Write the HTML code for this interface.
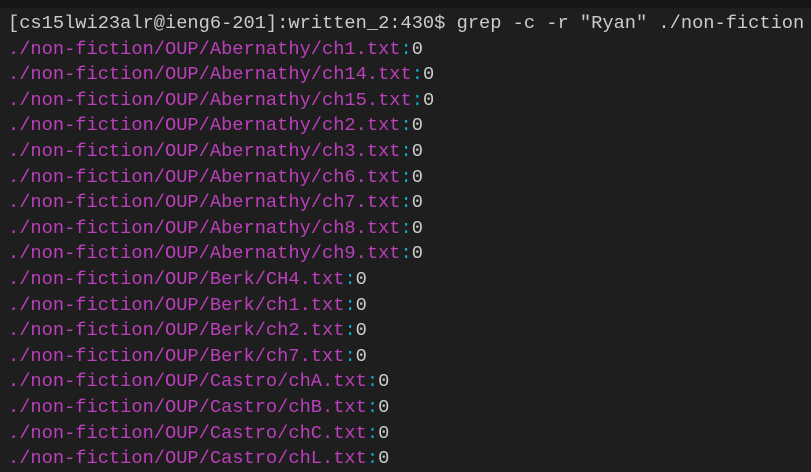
<!DOCTYPE html>
<html><head><meta charset="utf-8"><style>
html,body{margin:0;padding:0;}
body{width:811px;height:470px;background:#1e1e1e;overflow:hidden;position:relative;}
.top{position:absolute;left:0;top:0;width:811px;height:8px;background:#161616;}
pre{position:absolute;left:8px;top:11px;margin:0;font-family:"Liberation Mono",monospace;font-size:18.7px;line-height:25.6px;color:#cccccc;white-space:pre;}
.m{color:#bc3fbc}.c{color:#11a8cd}
</style></head><body><div class="top"></div><pre>[cs15lwi23alr@ieng6-201]:written_2:430$ grep -c -r "Ryan" ./non-fiction
<span class="m">./non-fiction/OUP/Abernathy/ch1.txt</span><span class="c">:</span>0
<span class="m">./non-fiction/OUP/Abernathy/ch14.txt</span><span class="c">:</span>0
<span class="m">./non-fiction/OUP/Abernathy/ch15.txt</span><span class="c">:</span>0
<span class="m">./non-fiction/OUP/Abernathy/ch2.txt</span><span class="c">:</span>0
<span class="m">./non-fiction/OUP/Abernathy/ch3.txt</span><span class="c">:</span>0
<span class="m">./non-fiction/OUP/Abernathy/ch6.txt</span><span class="c">:</span>0
<span class="m">./non-fiction/OUP/Abernathy/ch7.txt</span><span class="c">:</span>0
<span class="m">./non-fiction/OUP/Abernathy/ch8.txt</span><span class="c">:</span>0
<span class="m">./non-fiction/OUP/Abernathy/ch9.txt</span><span class="c">:</span>0
<span class="m">./non-fiction/OUP/Berk/CH4.txt</span><span class="c">:</span>0
<span class="m">./non-fiction/OUP/Berk/ch1.txt</span><span class="c">:</span>0
<span class="m">./non-fiction/OUP/Berk/ch2.txt</span><span class="c">:</span>0
<span class="m">./non-fiction/OUP/Berk/ch7.txt</span><span class="c">:</span>0
<span class="m">./non-fiction/OUP/Castro/chA.txt</span><span class="c">:</span>0
<span class="m">./non-fiction/OUP/Castro/chB.txt</span><span class="c">:</span>0
<span class="m">./non-fiction/OUP/Castro/chC.txt</span><span class="c">:</span>0
<span class="m">./non-fiction/OUP/Castro/chL.txt</span><span class="c">:</span>0</pre></body></html>
